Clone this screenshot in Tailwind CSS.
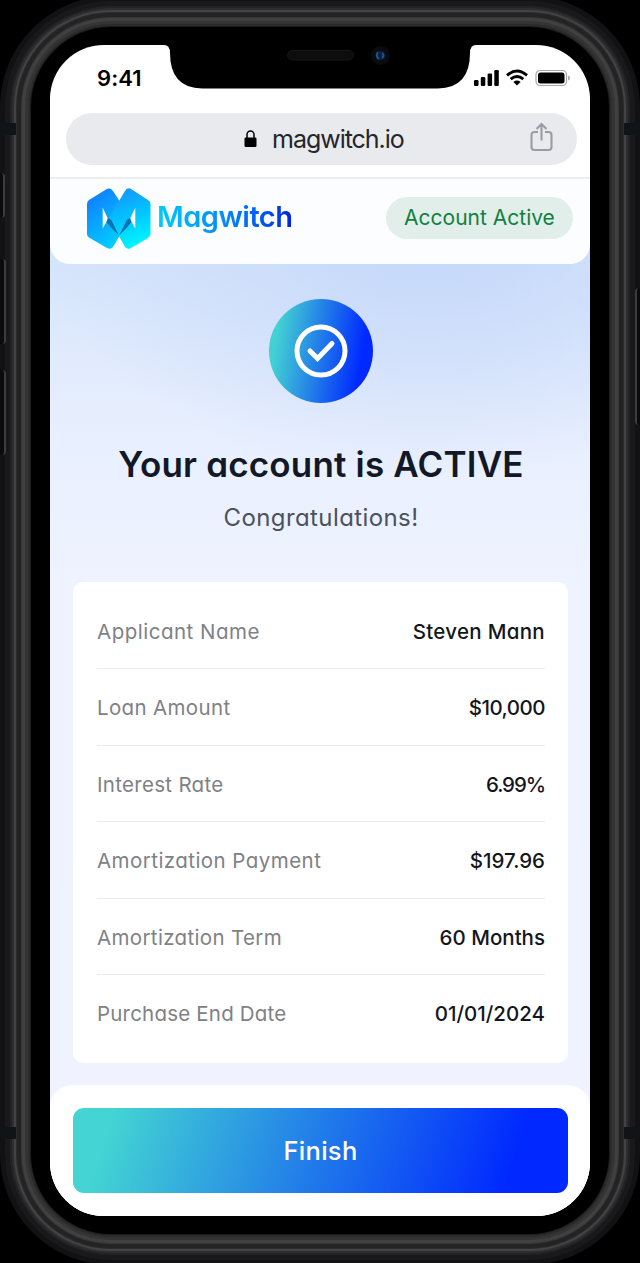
<!DOCTYPE html>
<html lang="en">
<head>
<meta charset="utf-8">
<title>Magwitch</title>
<script src="https://cdn.jsdelivr.net/npm/@tailwindcss/browser@4"></script>
</head>
<body class="bg-black font-[Inter,'Liberation_Sans',sans-serif] [font-feature-settings:'cv11']">
<div class="relative w-[640px] h-[1263px] overflow-hidden bg-black pt-[27px] px-[31px]">
  <!-- bezel with metal rings -->
  <div class="relative h-[1207px] rounded-[80px] bg-black px-[19px] pt-[18px] shadow-[0_0_0_1px_#1c1c1c,0_0_0_3px_#2b2b2c,0_0_0_6px_#343435,0_0_0_9px_#404041,0_0_0_10px_#373738,0_0_0_14px_#232324,0_0_0_15px_#2c2c2e,0_0_0_17px_#434346,0_0_0_19px_#2e2e31,0_0_0_21px_#232326,0_0_0_26px_#19191b,0_0_0_31px_#121214]">
    <!-- screen -->
    <div class="h-[1171px] rounded-[54px] bg-white overflow-hidden flex flex-col">
      <div class="h-[68px] shrink-0 flex justify-between pl-[47px] pr-5">
        <span class="mt-[18px] text-[22px] leading-[30px] font-semibold tracking-[0.1px]">9:41</span>
        <svg class="mt-[23px] h-[20px] w-[97px]" viewBox="473 68 97 20">
          <rect x="474" y="80" width="4.500" height="6" rx="1.200"/><rect x="480.800" y="77" width="4.500" height="9" rx="1.200"/><rect x="487.600" y="73.500" width="4.500" height="12.500" rx="1.200"/><rect x="494.300" y="70" width="4.500" height="16" rx="1.200"/>
          <g fill="none" stroke="#000" stroke-width="2.900"><path d="M507 75.400Q517 66.800 527 75.400"/><path d="M510.700 79.200Q517 73.800 523.300 79.200"/></g>
          <path d="M513.400 81.900Q517 79 520.600 81.900L517 85.600Z"/>
          <rect x="536" y="70.500" width="30.500" height="15" rx="4.200" fill="#fff" stroke="#a5a5a5" stroke-width="1.200"/><rect x="538" y="72.500" width="26.500" height="11" rx="2.500"/><path d="M568 75.500Q570 76 570 78T568 80.500Z" fill="#aaa"/>
        </svg>
      </div>
      <div class="ml-4 mr-[13px] h-[52px] shrink-0 rounded-full bg-[#e8eaee] flex items-center">
        <svg class="ml-[178px] w-[13px] h-[18px]" viewBox="0 0 13 18"><rect x="0.500" y="7.500" width="12" height="9.500" rx="1.300"/><path d="M3 8V4.500a3.500 3.500 0 0 1 7 0V8" fill="none" stroke="#000" stroke-width="1.500"/></svg>
        <span class="ml-[15px] text-[25px] leading-[30px] tracking-[-1.020px] text-[#25262b] [font-feature-settings:normal]">magwitch.io</span>
        <svg class="ml-auto mr-[24px] mb-[4px] w-[23px] h-[30px]" viewBox="0 0 23 30" fill="none" stroke="#9b9ca1" stroke-width="2.100"><path d="M8 10H4.500Q1.500 10 1.500 13V25Q1.500 28 4.500 28H18.500Q21.500 28 21.500 25V13Q21.500 10 18.500 10H15M11.500 18.500V2M6.500 7L11.500 2L16.500 7"/></svg>
      </div>
      <div class="h-[12px] shrink-0"></div>
      <main class="relative flex-1 flex flex-col bg-[radial-gradient(ellipse_380px_230px_at_70%_70px,#c5d8fa_0%,#c9dafaaa_40%,#dce8ff00_100%),linear-gradient(180deg,#d4e4fb_80px,#e6eefe_230px,#eff3ff_400px,#f0f3ff_100%)]">
        <header class="h-[87px] shrink-0 rounded-b-[20px] border-t-2 border-[#eceef1] bg-[#fbfdff] flex pl-[37px] pr-[17px]">
          <svg class="mt-[9px] w-[64px] h-[62px]" viewBox="0 0 64 62">
            <defs><linearGradient id="a" gradientUnits="userSpaceOnUse" x1="4" y1="8" x2="40" y2="56"><stop stop-color="#0f80ff"/><stop offset="1" stop-color="#00d8ff"/></linearGradient><linearGradient id="b" gradientUnits="userSpaceOnUse" x1="34" y1="3" x2="56" y2="58"><stop stop-color="#1597ff"/><stop offset=".5" stop-color="#00c8ff"/><stop offset="1" stop-color="#00fbff"/></linearGradient></defs>
            <path fill="url(#a)" d="M19 1.500Q23-1 26 3L32.500 13V48L26 59Q24 62 20 60L2 49.500Q0 48.500 0 46V16Q0 13.500 2 12Z"/>
            <path fill="url(#b)" d="M32 13L38 3Q40-1 44 1L61 12Q63.500 13.500 63.500 16V46Q63.500 48.500 61 50L44 60Q41 62 38 59L32 48L21 31Z"/>
            <path fill="#fff" d="M15.700 19.500L21 31L15.700 40.500ZM48.300 19.500L43 31L48.300 40.500Z"/>
            <path fill="#0673b4" d="M21 30L24 31.500L32 47.500L25 40.500L19.500 34ZM43 30L40 31.500L32 47.500L39 40.500L44.500 34Z"/>
          </svg>
          <span class="ml-[6px] mt-[20px] h-[40px] text-[29px] leading-[36px] font-semibold tracking-[-0.500px] bg-linear-to-r from-[#05ccf5] via-[#0b88fa] to-[#0419e5] bg-clip-text text-transparent">Magwitch</span>
          <span class="ml-auto mt-[18px] h-[42px] w-[187px] shrink-0 rounded-full bg-[#e2eeea] text-center text-[21px] leading-[42px] text-[#12803f]">Account Active</span>
        </header>
        <section class="flex flex-col items-center pl-[2px]">
          <svg class="mt-[35px] w-[104px] h-[104px]" viewBox="0 0 104 104" fill="none" stroke="#fff" stroke-width="5"><defs><linearGradient id="c" x1="0" y1=".42" x2="1" y2=".58"><stop offset=".06" stop-color="#43d1d3"/><stop offset=".9" stop-color="#0028ff"/></linearGradient></defs><circle cx="52" cy="52" r="52" fill="url(#c)" stroke="none"/><circle cx="52" cy="52" r="24"/><path d="M41 52L48.500 59.500L63 44.500" stroke-linecap="round"/></svg>
          <h1 class="mt-[36px] text-[35px] leading-[50px] font-semibold tracking-[0.180px] text-[#121826] whitespace-nowrap">Your account is ACTIVE</h1>
          <p class="mt-[11px] text-[24px] leading-[36px] tracking-[0.400px] text-[#4b5161]">Congratulations!</p>
        </section>
        <dl class="mt-[46px] ml-[23px] mr-[22px] h-[481px] rounded-[10px] bg-white pt-[11px] pl-[24px] pr-[23px] text-[20.500px] text-[#14161d] divide-y divide-[#ebecef]">
          <div class="h-[76.400px] pt-[3px] flex items-center justify-between"><dt class="tracking-[0.500px] text-[#808186]">Applicant Name</dt><dd class="font-medium tracking-[0.300px]">Steven Mann</dd></div>
          <div class="h-[76.400px] pt-[3px] flex items-center justify-between"><dt class="tracking-[0.350px] text-[#808186]">Loan Amount</dt><dd class="font-medium tracking-[-0.500px]">$10,000</dd></div>
          <div class="h-[76.400px] pt-[3px] flex items-center justify-between"><dt class="tracking-[0.300px] text-[#808186]">Interest Rate</dt><dd class="font-medium tracking-[-1.100px]">6.99%</dd></div>
          <div class="h-[76.400px] pt-[4px] flex items-center justify-between"><dt class="tracking-[0.450px] text-[#808186]">Amortization Payment</dt><dd class="font-medium">$197.96</dd></div>
          <div class="h-[76.400px] pt-[4px] flex items-center justify-between"><dt class="tracking-[0.350px] text-[#808186]">Amortization Term</dt><dd class="font-medium">60 Months</dd></div>
          <div class="h-[76.400px] pt-[3px] flex items-center justify-between"><dt class="tracking-[0.200px] text-[#808186]">Purchase End Date</dt><dd class="font-medium">01/01/2024</dd></div>
        </dl>
        <footer class="mt-auto h-[131px] rounded-t-[22px] bg-white pt-[23px] pl-[23px] pr-[22px]">
          <button class="w-full h-[85px] pt-[1px] rounded-[11px] bg-[linear-gradient(108deg,#43d4d3_8%,#0028ff_88%)] text-white text-[25.500px] tracking-[0.300px] font-medium">Finish</button>
        </footer>
      </main>
    </div>
    <!-- notch -->
    <svg class="absolute left-[133px] top-[17px] w-[312px] h-[46px]" viewBox="164 44 312 46">
      <path d="M164 44H476V45Q470 45 470 53Q470 88 438 88.500H202Q170 88 170 53Q170 45 164 45Z"/>
      <rect x="287.500" y="50.500" width="66" height="9.500" rx="4.700" fill="#0d0d0d" stroke="#161616"/><circle cx="380.500" cy="55.500" r="9.500" fill="#0a0b0c"/><circle cx="380.500" cy="55.500" r="5" fill="#0b1e3a"/><path d="M378 52Q375 56 379 59M382 53Q385 55 382 58" fill="none" stroke="#24568e" stroke-width="1.800"/>
    </svg>
  </div>
  <!-- antenna bands and side buttons -->
  <div class="absolute left-0 top-[123px] w-[16px] h-[12px] bg-[#111416]"></div>
  <div class="absolute right-0 top-[123px] w-[16px] h-[12px] bg-[#111416]"></div>
  <div class="absolute left-0 top-[1127px] w-[16px] h-[12px] bg-[#111416]"></div>
  <div class="absolute right-0 top-[1127px] w-[16px] h-[12px] bg-[#111416]"></div>
  <div class="absolute left-0 top-[173px] w-[5px] h-[45px] rounded-r-[4px] border-r-2 border-[#3b3b40] bg-[#0b0b0d]"></div>
  <div class="absolute left-0 top-[259px] w-[6px] h-[85px] rounded-r-[4px] border-r-2 border-[#3b3b40] bg-[#0b0b0d]"></div>
  <div class="absolute left-0 top-[370px] w-[6px] h-[85px] rounded-r-[4px] border-r-2 border-[#3b3b40] bg-[#0b0b0d]"></div>
  <div class="absolute right-0 top-[288px] w-[5px] h-[137px] rounded-l-[4px] border-l-2 border-[#3b3b40] bg-[#0b0b0d]"></div>
</div>
</body>
</html>
